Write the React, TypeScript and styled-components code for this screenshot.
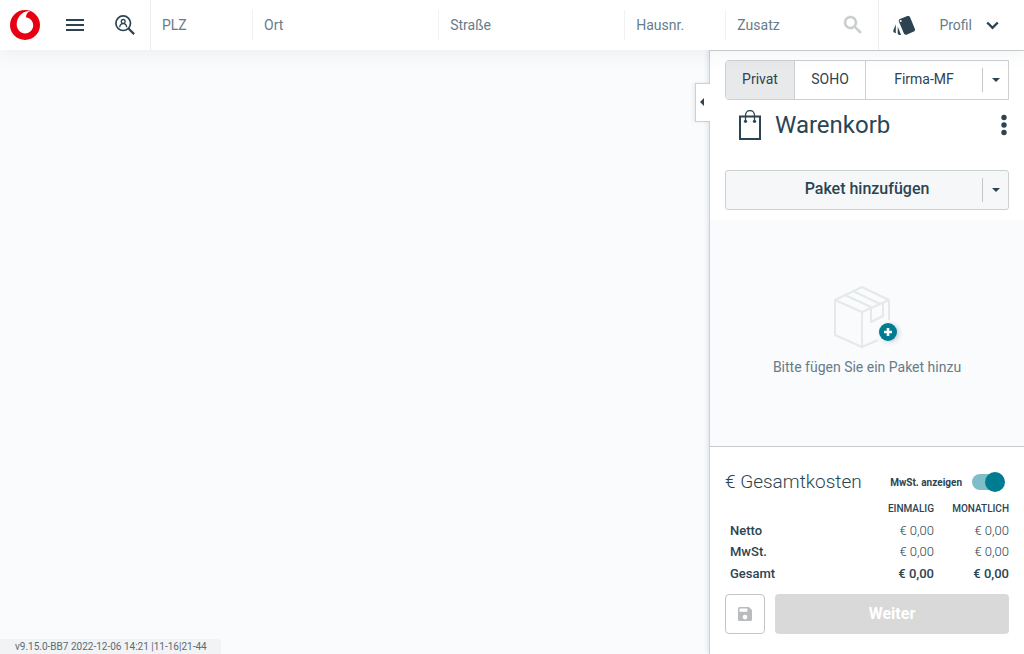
import React from "react";
import styled, { createGlobalStyle } from "styled-components";

const ink = "#2c4452";
const muted = "#667c89";
const teal = "#007c92";
const line = "#cdd0d1";

const GlobalStyle = createGlobalStyle`
  *, *::before, *::after { box-sizing: border-box; }
  body { margin: 0; background: #fafbfd; }
  body, button, input { font-family: Roboto, "Liberation Sans", sans-serif; color: ${ink}; }
  button { cursor: pointer; }
`;

const Page = styled.div`
  min-height: 100vh;
  display: flex;
  flex-direction: column;
`;

const Header = styled.header`
  position: relative;
  z-index: 1;
  height: 50px;
  display: flex;
  background: #fff;
  box-shadow: 0 2px 20px rgba(44, 68, 82, 0.08);
`;

const IconButton = styled.button`
  width: 50px;
  height: 50px;
  flex: none;
  display: flex;
  align-items: center;
  justify-content: center;
  padding: 0;
  border: 0;
  background: none;
`;

const LogoLink = styled.a`
  width: 50px;
  height: 50px;
  flex: none;
  display: grid;
  place-items: center;
`;

const AddressForm = styled.form`
  flex: 1;
  min-width: 0;
  display: grid;
  grid-template-columns: 101fr 186fr 186fr 101fr 153fr;
  align-items: center;
  height: 50px;
  border-left: 1px solid #ebeded;
  border-right: 1px solid #ebeded;
`;

const Field = styled.div<{ $first?: boolean }>`
  display: flex;
  align-items: center;
  min-width: 0;
  height: 30px;
  padding-left: 11px;
  border-left: ${(p) => (p.$first ? "0" : "1px solid #f0f1f2")};
`;

const AddressInput = styled.input`
  flex: 1;
  min-width: 0;
  width: 100%;
  height: 30px;
  padding: 0;
  border: 0;
  outline: 0;
  background: none;
  font-size: 14px;
  &::placeholder { color: ${muted}; opacity: 1; }
`;

const ProfileButton = styled.button`
  display: flex;
  align-items: center;
  gap: 14px;
  padding: 0 25px 0 10px;
  border: 0;
  background: none;
  color: ${muted};
  font-size: 14px;
`;

const Body = styled.div`
  flex: 1;
  display: flex;
`;

const Workspace = styled.main`
  flex: 1;
  min-width: 0;
  display: flex;
  align-items: flex-end;
`;

const Version = styled.div`
  height: 15px;
  padding: 0 14px 0 15px;
  border-top-right-radius: 3px;
  background: #f2f3f5;
  color: #5c6a75;
  font-size: 10px;
  line-height: 15px;
`;

const Sidebar = styled.aside`
  position: relative;
  width: 315px;
  flex: none;
  display: flex;
  flex-direction: column;
  background: #fff;
  border-left: 1px solid ${line};
  border-top: 1px solid ${line};
  box-shadow: -1px 0 5px rgba(44, 68, 82, 0.14);
`;

const CollapseButton = styled.button`
  position: absolute;
  left: -15px;
  top: 32px;
  width: 15px;
  height: 39px;
  display: grid;
  place-items: center;
  padding: 0 2px 2px 0;
  border: 1px solid ${line};
  border-right: 0;
  background: #fff;
  box-shadow: -2px 0 3px rgba(44, 68, 82, 0.08);
`;

const CartHead = styled.section`
  padding: 9px 15px 10px;
`;

const Segments = styled.div`
  display: flex;
  height: 40px;
  border: 1px solid ${line};
  border-radius: 4px 0 0 4px;
  overflow: hidden;
`;

const Segment = styled.button<{ $width?: number; $active?: boolean }>`
  flex: ${(p) => (p.$width ? `0 0 ${p.$width}px` : "1")};
  padding: 0 0 2px;
  border: 0;
  border-right: ${(p) => (p.$width ? `1px solid ${line}` : "0")};
  background: ${(p) => (p.$active ? "#e8e9eb" : "#fff")};
  font-size: 14px;
`;

const DropButton = styled.button`
  flex: none;
  align-self: center;
  width: 26px;
  height: 24px;
  display: grid;
  place-items: center;
  padding: 0;
  border: 0;
  border-left: 1px solid #c4c7c9;
  background: none;
`;

const CartTitleRow = styled.div`
  display: flex;
  align-items: center;
  height: 30px;
  margin: 10px 0 30px;
  padding-left: 14px;
`;

const CartTitle = styled.h1`
  flex: 1;
  margin: 0 0 0 14px;
  font-size: 24px;
  line-height: 30px;
  font-weight: 400;
`;

const MoreButton = styled.button`
  display: flex;
  padding: 0;
  border: 0;
  background: none;
`;

const PackageBar = styled.div`
  display: flex;
  height: 40px;
  border: 1px solid ${line};
  border-radius: 3px;
  background: #f6f7f9;
`;

const PackageButton = styled.button`
  flex: 1;
  padding: 0 0 3px 26px;
  border: 0;
  background: none;
  font-size: 16px;
  font-weight: 500;
`;

const EmptyCart = styled.section`
  flex: 1;
  display: flex;
  flex-direction: column;
  align-items: center;
  justify-content: center;
  padding-bottom: 4px;
  background: #fafbfd;
  border-bottom: 1px solid #c8cbcc;
`;

const EmptyText = styled.p`
  margin: 8px 0 0;
  color: ${muted};
  font-size: 14px;
  line-height: 20px;
`;

const Summary = styled.section`
  padding: 20px 15px;
`;

const SummaryHead = styled.div`
  display: flex;
  align-items: center;
  justify-content: space-between;
  height: 30px;
  padding-right: 4px;
`;

const SummaryTitle = styled.h2`
  margin: 0;
  font-size: 19px;
  line-height: 30px;
  font-weight: 300;
`;

const SwitchLabel = styled.label`
  display: flex;
  align-items: center;
  gap: 10px;
  font-size: 10px;
  font-weight: 700;
`;

const Switch = styled.input`
  appearance: none;
  width: 33px;
  height: 20px;
  display: flex;
  align-items: center;
  margin: 0;
  cursor: pointer;
  &::before {
    content: "";
    width: 30px;
    height: 16px;
    border-radius: 8px;
    background: #7fbdc8;
  }
  &::after {
    content: "";
    width: 20px;
    height: 20px;
    flex: none;
    margin-left: -17px;
    border-radius: 50%;
    background: ${teal};
  }
  &:not(:checked)::after { margin-left: -30px; }
`;

const Costs = styled.table`
  width: 100%;
  border-collapse: collapse;
  font-size: 13px;
`;

const ColumnHead = styled.th`
  width: 75px;
  height: 23px;
  padding: 0;
  text-align: right;
  font-size: 10px;
  font-weight: 500;
`;

const CostRow = styled.tr<{ $total?: boolean }>`
  height: ${(p) => (p.$total ? 22 : 21)}px;
  td { font-weight: ${(p) => (p.$total ? 500 : 300)}; }
`;

const RowHead = styled.th`
  padding: 0 0 0 5px;
  text-align: left;
  font-weight: 500;
`;

const Amount = styled.td`
  padding: 0;
  text-align: right;
`;

const Actions = styled.div`
  display: flex;
  gap: 10px;
  margin-top: 10px;
`;

const SaveButton = styled.button`
  width: 40px;
  height: 40px;
  display: grid;
  place-items: center;
  padding: 0;
  border: 1px solid #c4c4c4;
  border-radius: 4px;
  background: #fff;
`;

const NextButton = styled.button`
  flex: 1;
  height: 40px;
  padding: 0 0 2px;
  border: 0;
  border-radius: 4px;
  background: #d9d9d9;
  color: #fff;
  font-size: 16px;
  font-weight: 700;
`;

const Caret = () => (
  <svg width="8" height="4" viewBox="0 0 8 4" aria-hidden="true">
    <path d="M0 0h8L4 4z" fill={ink} />
  </svg>
);

const Logo = () => (
  <svg width="30" height="30" viewBox="0 0 30 30" aria-hidden="true">
    <circle cx="15" cy="15" r="15" fill="#e60012" />
    <path
      d="M15.1 23.400c-4.300 0-8.400-3.500-8.400-9.100C6.700 8.400 10.800 1.600 18.900.9c.5 0 1 .1 1.100.3C17.600 1.900 16 4.400 16 6.700v.5c4.200 1 7.200 3.800 7.200 8 0 4.600-3.500 8.200-8.100 8.200z"
      fill="#fff"
    />
  </svg>
);

const PersonSearch = () => (
  <svg width="20" height="20" viewBox="0 0 20 20" fill="none" stroke={ink} aria-hidden="true">
    <circle cx="8.200" cy="8.200" r="7.300" strokeWidth="1.700" />
    <circle cx="8.200" cy="6.400" r="1.900" strokeWidth="1.300" />
    <path d="M4.700 12.300c.2-2.300 1.500-3.600 3.500-3.600s3.300 1.300 3.500 3.600" strokeWidth="1.300" />
    <path d="M13.500 13.500l5.600 5.600" strokeWidth="2.200" />
  </svg>
);

const Cards = () => (
  <svg width="24" height="22" viewBox="0 0 24 22" fill={ink} aria-hidden="true">
    <path d="M2.500 18.700l1.300.6v-9l-2.400 5.900c-.4 1 .1 2.100 1.100 2.500zM22.900 15L18 3.100c-.3-.8-1-1.200-1.800-1.200-.3 0-.5 0-.8.1L8 5.100C7.300 5.400 6.800 6.100 6.800 6.800c0 .3 0 .5.1.8l5 12c.3.7 1 1.200 1.800 1.200.3 0 .5 0 .8-.1l7.300-3.100c1-.4 1.500-1.600 1.100-2.600zM8.700 8a1 1 0 110-2 1 1 0 010 2zM5.700 18.900c0 1.100.9 2 2 2h1.400l-3.400-8.400z" />
  </svg>
);

const Bag = () => (
  <svg width="22" height="30" viewBox="0 0 22 30" fill="none" stroke={ink} aria-hidden="true">
    <path d="M1 6.500h20V29H1z" strokeWidth="2" />
    <path d="M6.500 11V5.500a4.500 5 0 019 0V11" strokeWidth="1.300" />
    <circle cx="6.500" cy="11.300" r="1.600" fill={ink} stroke="none" />
    <circle cx="15.500" cy="11.300" r="1.600" fill={ink} stroke="none" />
  </svg>
);

const PackageArt = () => (
  <svg width="76" height="64" viewBox="3 0 76 64" aria-hidden="true">
    <defs>
      <filter id="badge-shadow" x="-50%" y="-50%" width="200%" height="200%">
        <feDropShadow dx="2" dy="1" stdDeviation="2" floodColor="#2c4452" floodOpacity="0.25" />
      </filter>
    </defs>
    <g fill="none" stroke="#e5e9ea" strokeWidth="2" strokeLinejoin="round">
      <path d="M63 35V15L36 2 9 15v35l27 12 16-7M9 15l27 12 27-12M36 27v35M19 10l27 12.500M27 6l27 13M45 23v14l12-6V18" />
    </g>
    <circle cx="62" cy="47" r="9" fill={teal} filter="url(#badge-shadow)" />
    <path d="M62 43v8M58 47h8" stroke="#fff" strokeWidth="2.600" />
  </svg>
);

const fields = [
  { label: "PLZ" },
  { label: "Ort" },
  { label: "Straße" },
  { label: "Hausnr." },
  { label: "Zusatz", search: true },
];

const costs = [
  { label: "Netto", once: "€ 0,00", monthly: "€ 0,00" },
  { label: "MwSt.", once: "€ 0,00", monthly: "€ 0,00" },
  { label: "Gesamt", once: "€ 0,00", monthly: "€ 0,00", total: true },
];

export default function App() {
  return (
    <Page>
      <GlobalStyle />
      <Header>
        <LogoLink href="#" aria-label="Vodafone">
          <Logo />
        </LogoLink>
        <IconButton aria-label="Menü">
          <svg width="18" height="12" viewBox="0 0 18 12" aria-hidden="true">
            <path d="M0 0h18v2H0zM0 5h18v2H0zM0 10h18v2H0z" fill={ink} />
          </svg>
        </IconButton>
        <IconButton aria-label="Kundensuche">
          <PersonSearch />
        </IconButton>
        <AddressForm onSubmit={(e) => e.preventDefault()}>
          {fields.map((f, i) => (
            <Field key={f.label} $first={i === 0}>
              <AddressInput placeholder={f.label} aria-label={f.label} />
              {f.search && (
                <IconButton type="submit" aria-label="Suchen">
                  <svg width="24" height="24" viewBox="0 0 24 24" fill="#c9cccd" stroke="#c9cccd" strokeWidth="0.600" aria-hidden="true">
                    <path d="M15.500 14h-.79l-.28-.27A6.470 6.470 0 0016 9.500 6.500 6.500 0 109.500 16c1.610 0 3.090-.59 4.230-1.570l.27.28v.79l5 4.990L20.490 19l-4.990-5zm-6 0C7.010 14 5 11.990 5 9.500S7.010 5 9.500 5 14 7.010 14 9.500 11.990 14 9.500 14z" />
                  </svg>
                </IconButton>
              )}
            </Field>
          ))}
        </AddressForm>
        <IconButton aria-label="Karten">
          <Cards />
        </IconButton>
        <ProfileButton>
          Profil
          <svg width="13" height="9" viewBox="0 0 13 9" fill="none" aria-hidden="true">
            <path d="M1.200 1.500l5.300 5.300 5.300-5.300" stroke={ink} strokeWidth="2.400" />
          </svg>
        </ProfileButton>
      </Header>
      <Body>
        <Workspace>
          <Version>v9.15.0-BB7 2022-12-06 14:21 |11-16|21-44</Version>
        </Workspace>
        <Sidebar>
          <CollapseButton aria-label="Warenkorb einklappen">
            <svg width="4" height="8" viewBox="0 0 4 8" aria-hidden="true">
              <path d="M4 0v8L0 4z" fill={ink} />
            </svg>
          </CollapseButton>
          <CartHead>
            <Segments>
              <Segment $width={69} $active>Privat</Segment>
              <Segment $width={71}>SOHO</Segment>
              <Segment>Firma-MF</Segment>
              <DropButton aria-label="Firma wählen">
                <Caret />
              </DropButton>
            </Segments>
            <CartTitleRow>
              <Bag />
              <CartTitle>Warenkorb</CartTitle>
              <MoreButton aria-label="Weitere Optionen">
                <svg width="10" height="22" viewBox="0 0 10 22" fill={ink} aria-hidden="true">
                  <circle cx="5" cy="3.500" r="2.700" />
                  <circle cx="5" cy="11" r="2.700" />
                  <circle cx="5" cy="18.500" r="2.700" />
                </svg>
              </MoreButton>
            </CartTitleRow>
            <PackageBar>
              <PackageButton>Paket hinzufügen</PackageButton>
              <DropButton aria-label="Paket wählen">
                <Caret />
              </DropButton>
            </PackageBar>
          </CartHead>
          <EmptyCart>
            <PackageArt />
            <EmptyText>Bitte fügen Sie ein Paket hinzu</EmptyText>
          </EmptyCart>
          <Summary>
            <SummaryHead>
              <SummaryTitle>€ Gesamtkosten</SummaryTitle>
              <SwitchLabel>
                MwSt. anzeigen
                <Switch type="checkbox" defaultChecked />
              </SwitchLabel>
            </SummaryHead>
            <Costs>
              <thead>
                <tr>
                  <td />
                  <ColumnHead scope="col">EINMALIG</ColumnHead>
                  <ColumnHead scope="col">MONATLICH</ColumnHead>
                </tr>
              </thead>
              <tbody>
                {costs.map((c) => (
                  <CostRow key={c.label} $total={c.total}>
                    <RowHead scope="row">{c.label}</RowHead>
                    <Amount>{c.once}</Amount>
                    <Amount>{c.monthly}</Amount>
                  </CostRow>
                ))}
              </tbody>
            </Costs>
            <Actions>
              <SaveButton disabled aria-label="Speichern">
                <svg width="14" height="14" viewBox="3 3 18 18" fill="#b9bbbc" aria-hidden="true">
                  <path d="M17 3H5a2 2 0 00-2 2v14a2 2 0 002 2h14c1.100 0 2-.9 2-2V7l-4-4zm-5 16a3 3 0 110-6 3 3 0 010 6zm3-10H5V5h10v4z" />
                </svg>
              </SaveButton>
              <NextButton disabled>Weiter</NextButton>
            </Actions>
          </Summary>
        </Sidebar>
      </Body>
    </Page>
  );
}
